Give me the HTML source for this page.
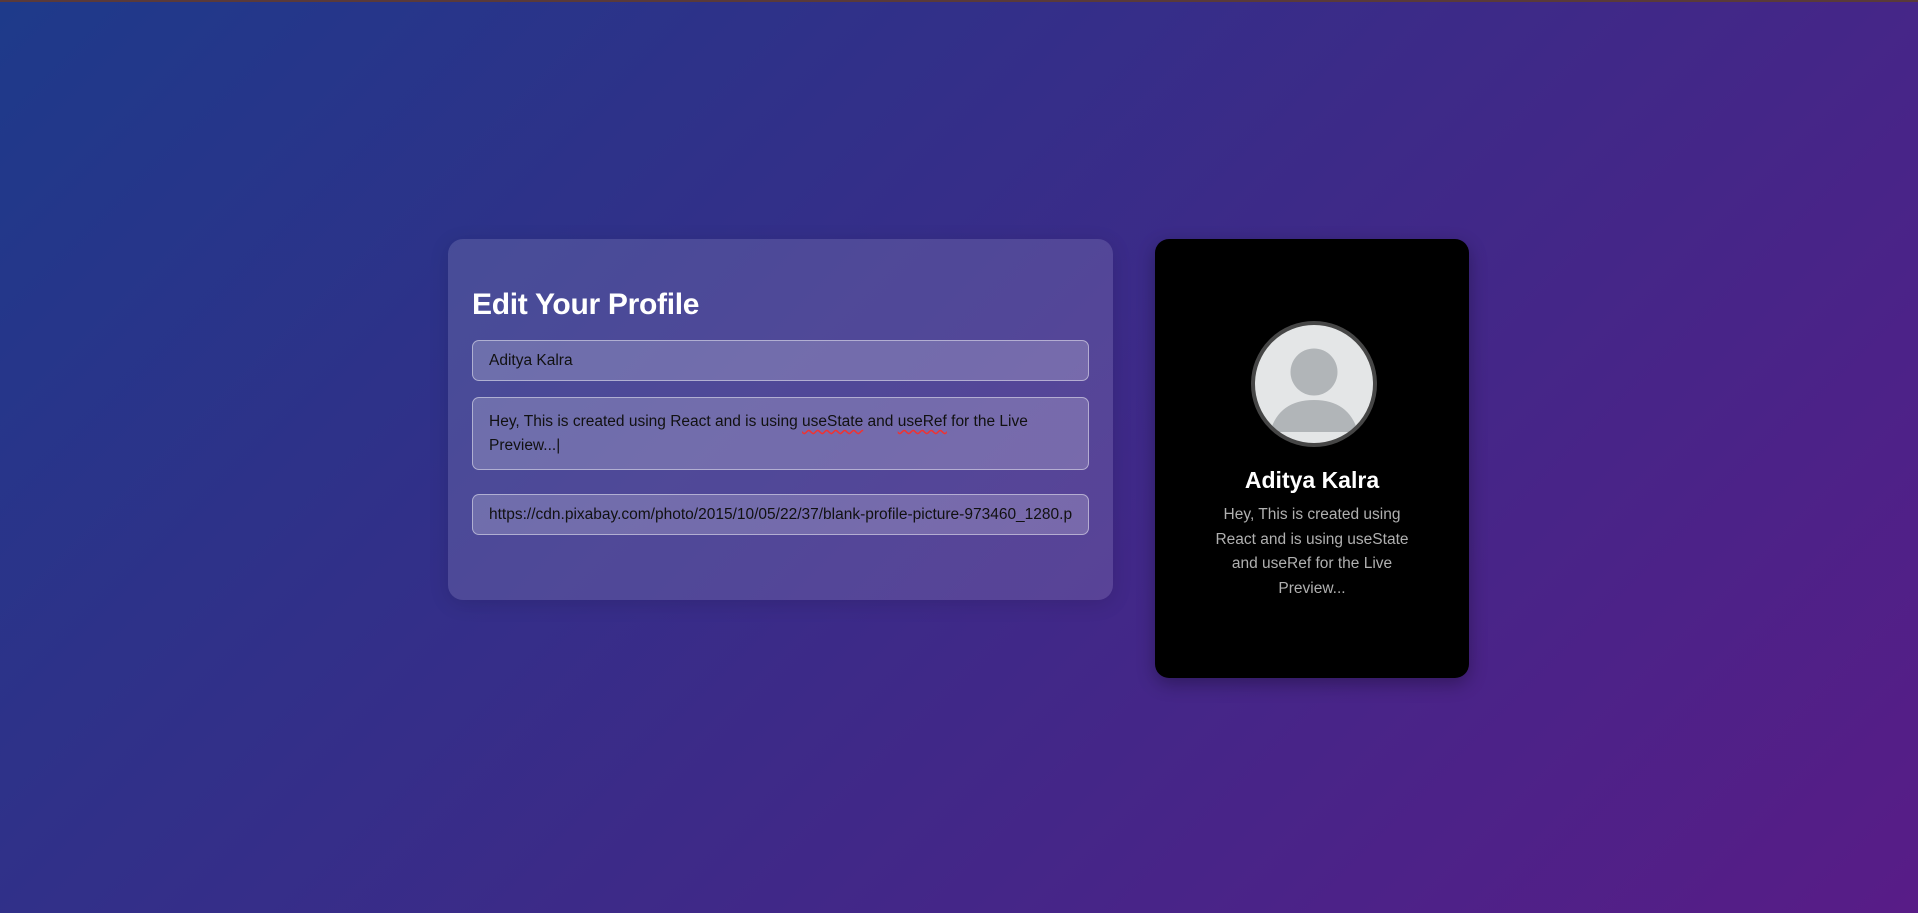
<!DOCTYPE html>
<html><head><meta charset="utf-8"><style>
*{box-sizing:border-box;margin:0;padding:0}
html,body{width:1918px;height:913px;overflow:hidden}
body{background:linear-gradient(135deg,#1e3a8a 0%,#581c87 100%);border-top:2px solid #5a3a3a;font-family:"Liberation Sans",sans-serif;position:relative}
.card{position:absolute;left:448px;top:237px;width:665px;height:361px;background:rgba(255,255,255,0.13);border-radius:15px;box-shadow:0 4px 20px rgba(0,0,0,0.12)}
h1{position:absolute;left:24px;top:49px;color:#fff;font-size:30px;font-weight:bold;letter-spacing:-0.3px}
.in{position:absolute;left:24px;width:617px;background:rgba(255,255,255,0.2);border:1px solid rgba(255,255,255,0.45);border-radius:7px;color:#111;font-size:15.5px;padding:0 16px;white-space:nowrap}
.clip{display:block;overflow:hidden;width:583px}
.prev{position:absolute;left:1155px;top:237px;width:314px;height:439px;background:#000;border-radius:14px;box-shadow:0 6px 18px rgba(0,0,0,0.3)}
.nm{position:absolute;top:228px;width:100%;text-align:center;color:#fff;font-size:23px;font-weight:bold}
.bio{position:absolute;top:264px;left:50px;width:214px;text-align:center;color:#b0b0b0;font-size:15.5px;line-height:24.5px}
u{text-decoration:underline wavy #e33;text-underline-offset:3px}
</style></head><body>
<div class="card">
<h1>Edit Your Profile</h1>
<div class="in" style="top:101px;height:41px;line-height:39px">Aditya Kalra</div>
<div class="in" style="top:158px;height:73px;padding-top:12px;line-height:24px;white-space:normal">Hey, This is created using React and is using <u>useState</u> and <u>useRef</u> for the Live Preview...|</div>
<div class="in" style="top:255px;height:41px;line-height:39px"><span class="clip">https://cdn.pixabay.com/photo/2015/10/05/22/37/blank-profile-picture-973460_1280.png</span></div>
</div>
<div class="prev">
<svg style="position:absolute;left:94px;top:80px" width="130" height="130" viewBox="0 0 130 130">
<defs><clipPath id="c"><circle cx="65" cy="65" r="61"/></clipPath></defs>
<circle cx="65" cy="65" r="61" fill="#e4e6e7"/>
<g clip-path="url(#c)"><circle cx="65" cy="53" r="23.5" fill="#b1b5b8"/><path d="M21 113 Q30 81 65 81 Q100 81 109 113 Z" fill="#b1b5b8"/></g>
<circle cx="65" cy="65" r="61" fill="none" stroke="#464646" stroke-width="4"/>
</svg>
<div class="nm">Aditya Kalra</div>
<div class="bio">Hey, This is created using React and is using useState and useRef for the Live Preview...</div>
</div>
</body></html>
